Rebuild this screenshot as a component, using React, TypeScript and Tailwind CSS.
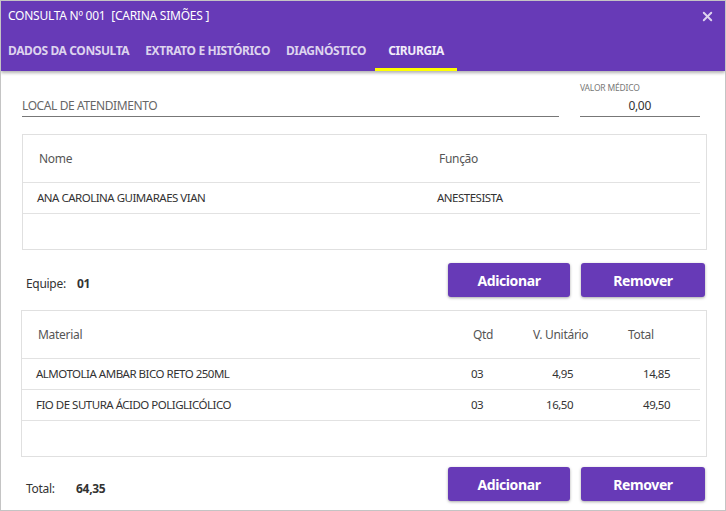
import { X } from "lucide-react";

const tabs = ["DADOS DA CONSULTA", "EXTRATO E HISTÓRICO", "DIAGNÓSTICO", "CIRURGIA"];

const materiais = [
  { nome: "ALMOTOLIA AMBAR BICO RETO 250ML", qtd: "03", unit: "4,95", total: "14,85" },
  { nome: "FIO DE SUTURA ÁCIDO POLIGLICÓLICO", qtd: "03", unit: "16,50", total: "49,50" },
];

function Botoes() {
  return (
    <div className="flex gap-[11px]">
      <button className="w-[122px] h-[34px] rounded-[3px] bg-[#673ab7] text-white font-bold text-[14px] tracking-[-0.4px] shadow-[0_1px_3px_rgba(0,0,0,0.35)]">
        Adicionar
      </button>
      <button className="w-[124px] h-[34px] rounded-[3px] bg-[#673ab7] text-white font-bold text-[14px] tracking-[-0.4px] shadow-[0_1px_3px_rgba(0,0,0,0.35)]">
        Remover
      </button>
    </div>
  );
}

export default function App() {
  return (
    <div
      className="w-[726px] h-[511px] border border-[#c4c4c4] bg-white overflow-hidden text-[#333] flex flex-col"
      style={{ fontFamily: '"Noto Sans", "Open Sans", sans-serif' }}
    >
      {/* Header */}
      <div className="relative h-[70px] bg-[#673ab7] shadow-[0_2px_3px_rgba(0,0,0,0.3)] shrink-0">
        <div className="flex items-center justify-between pl-[7px] pr-[10px] h-[30px]">
          <span className="text-white text-[12px] tracking-[-0.25px]">CONSULTA Nº 001&nbsp;&nbsp;[CARINA SIMÕES ]</span>
          <X className="w-[15px] h-[15px] text-[#ddd3ee]" strokeWidth={3} />
        </div>
        <div className="flex h-[40px] pl-[7px]">
          {tabs.map((t, i) => (
            <div
              key={t}
              className={
                "h-full flex items-center text-[12px] font-bold tracking-[-0.4px] " +
                (i === 3
                  ? "text-[#f1ecf9] px-[13px] border-b-[3px] border-[#ffff00] pt-[3px]"
                  : i === 2
                  ? "text-[#ddd3ee] mr-[9px]"
                  : "text-[#ddd3ee] mr-[16px]")
              }
            >
              {t}
            </div>
          ))}
        </div>
      </div>

      {/* Body */}
      <div className="px-[20px] pt-[11px] flex flex-col">
        <div className="flex items-end gap-[21px]">
          <div className="flex-1 ml-[1px] border-b border-[#777] h-[35px] flex items-end pb-[1px] text-[12px] tracking-[-0.4px] text-[#666]">
            LOCAL DE ATENDIMENTO
          </div>
          <div className="w-[120px] mr-[5px] border-b border-[#777] h-[35px] flex flex-col">
            <span className="text-[8.5px] tracking-[-0.2px] text-[#777] leading-none pt-[2px]">VALOR MÉDICO</span>
            <span className="text-[12px] tracking-[-0.3px] text-right pr-[49px] mt-[4px]">0,00</span>
          </div>
        </div>

        {/* Equipe */}
        <div className="mt-[17px] h-[116px] border border-[#e0e0e0] ml-[1px] mr-[-2px] pr-[6px]">
          <div className="flex h-[48px] items-center border-b border-[#e2e2e2] text-[12px] tracking-[-0.3px] text-[#555]">
            <span className="pl-[16px] w-[416px]">Nome</span>
            <span>Função</span>
          </div>
          <div className="flex h-[31px] items-center border-b border-[#e2e2e2] text-[11.5px] tracking-[-0.5px]">
            <span className="pl-[14px] w-[414px]">ANA CAROLINA GUIMARAES VIAN</span>
            <span>ANESTESISTA</span>
          </div>
        </div>

        <div className="flex items-center justify-between h-[34px] mt-[13px]">
          <div className="flex items-baseline pl-[5px] pt-[7px] text-[12px] tracking-[-0.3px]">
            <span className="w-[51px]">Equipe:</span>
            <span className="font-bold">01</span>
          </div>
          <Botoes />
        </div>

        {/* Materiais */}
        <div className="mt-[13px] h-[147px] border border-[#e0e0e0] mr-[-2px] pr-[6px]">
          <div className="flex h-[48px] items-center border-b border-[#e2e2e2] text-[12px] tracking-[-0.3px] text-[#555]">
            <span className="pl-[16px] w-[451px]">Material</span>
            <span className="w-[60px]">Qtd</span>
            <span className="w-[95px]">V. Unitário</span>
            <span>Total</span>
          </div>
          {materiais.map((m) => (
            <div key={m.nome} className="flex h-[31px] items-center border-b border-[#e2e2e2] text-[11.5px] tracking-[-0.5px]">
              <span className="pl-[14px] w-[449px]">{m.nome}</span>
              <span className="w-[50px]">{m.qtd}</span>
              <span className="w-[52px] text-right">{m.unit}</span>
              <span className="w-[97px] text-right">{m.total}</span>
            </div>
          ))}
        </div>

        <div className="flex items-center justify-between h-[34px] mt-[10px]">
          <div className="flex items-baseline pl-[5px] pt-[10px] text-[12px] tracking-[-0.3px]">
            <span className="w-[50px]">Total:</span>
            <span className="font-bold">64,35</span>
          </div>
          <Botoes />
        </div>
      </div>
    </div>
  );
}
